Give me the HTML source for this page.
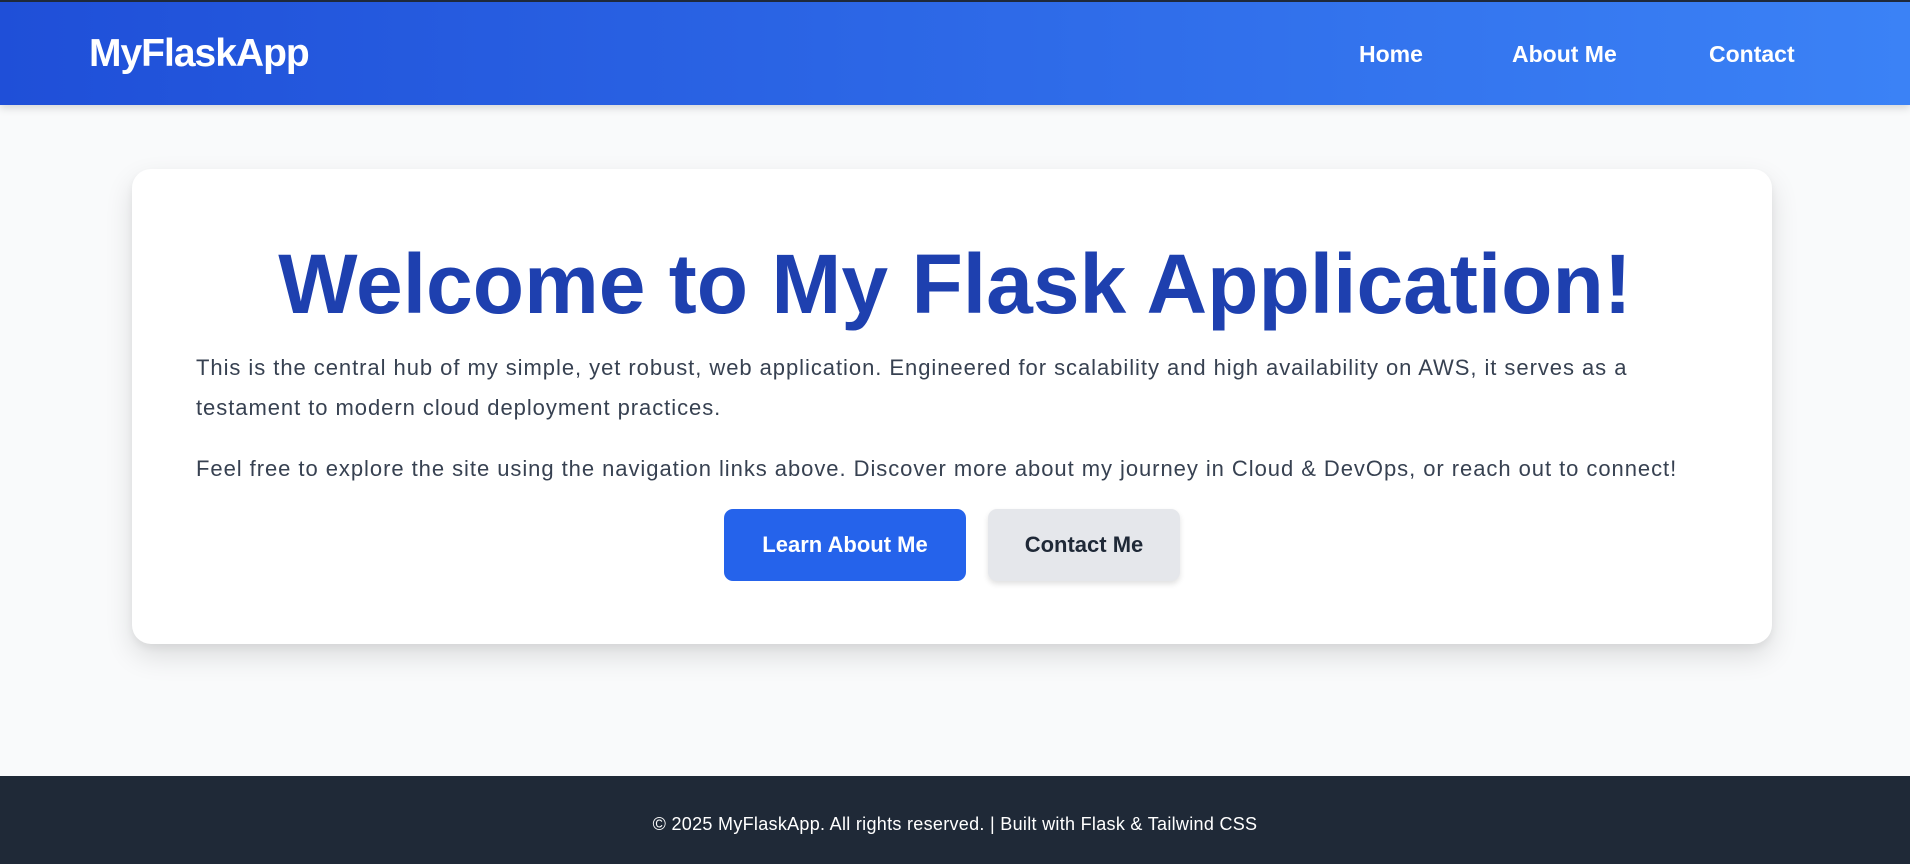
<!DOCTYPE html>
<html><head><meta charset="utf-8"><style>
*{margin:0;padding:0;box-sizing:border-box}
html,body{width:1910px;height:864px;overflow:hidden}
body{background:#f9fafb;font-family:"Liberation Sans",Arial,sans-serif;position:relative}
header{position:absolute;left:0;top:0;width:1910px;height:105px;background:linear-gradient(90deg,#1f4fd8,#3b82f6);border-top:2px solid #1e293b;box-shadow:0 3px 8px rgba(0,0,0,.15)}
.logo{position:absolute;left:89px;top:30px;color:#fff;font-weight:bold;font-size:39px;letter-spacing:-1px}
nav a{position:absolute;top:39px;color:#fff;font-weight:bold;font-size:23px;text-decoration:none}
.card{position:absolute;left:132px;top:169px;width:1640px;height:475px;background:#fff;border-radius:19px;box-shadow:0 12px 28px rgba(0,0,0,.12),0 4px 8px rgba(0,0,0,.05)}
h1{position:absolute;left:0;width:100%;top:242px;text-align:center;color:#1e40af;font-size:84px;font-weight:900;line-height:1}
.p{position:absolute;left:196px;color:#374151;font-size:22px;letter-spacing:0.95px;line-height:40px;white-space:nowrap}
.btn{position:absolute;top:509px;height:72px;border-radius:9px;font-size:22px;font-weight:bold;display:flex;align-items:center;justify-content:center}
footer{position:absolute;left:0;top:776px;width:1910px;height:88px;background:#1f2937;color:#fff;font-size:18px;letter-spacing:0.3px;text-align:center;line-height:96px}
</style></head><body>
<header><div class="logo">MyFlaskApp</div>
<nav><a style="left:1359px">Home</a><a style="left:1512px">About Me</a><a style="left:1709px">Contact</a></nav></header>
<div class="card"></div>
<h1>Welcome to My Flask Application!</h1>
<div class="p" style="top:348px">This is the central hub of my simple, yet robust, web application. Engineered for scalability and high availability on AWS, it serves as a<br>testament to modern cloud deployment practices.</div>
<div class="p" style="top:449px">Feel free to explore the site using the navigation links above. Discover more about my journey in Cloud &amp; DevOps, or reach out to connect!</div>
<div class="btn" style="left:724px;width:242px;background:#2563eb;color:#fff">Learn About Me</div>
<div class="btn" style="left:988px;width:192px;background:#e5e7eb;color:#1f2937;box-shadow:0 3px 6px rgba(0,0,0,.12)">Contact Me</div>
<footer>© 2025 MyFlaskApp. All rights reserved. | Built with Flask &amp; Tailwind CSS</footer>
</body></html>
